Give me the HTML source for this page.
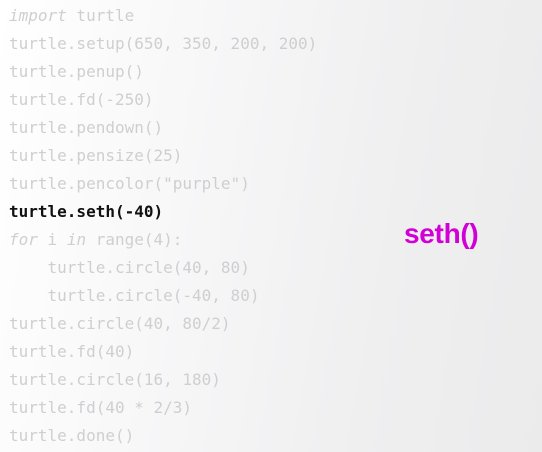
<!DOCTYPE html>
<html><head><style>
html,body{margin:0;padding:0}
body{width:542px;height:452px;overflow:hidden;background:linear-gradient(100deg,#ffffff 0%,#f7f7f8 35%,#efeff0 70%,#ebebec 100%);position:relative;font-family:"DejaVu Sans Mono","Liberation Mono",monospace;}
.l{position:absolute;left:9px;font-size:16px;line-height:20px;color:#cfcfd1;white-space:pre;}
.b{color:#111;font-weight:bold}
i{font-style:italic}
.s{position:absolute;left:404px;top:218px;font-family:"Liberation Sans",sans-serif;font-weight:bold;font-size:28px;color:#d000d6;letter-spacing:-0.3px}
</style></head><body>
<div class="l" style="top:6px"><i>import</i> turtle</div>
<div class="l" style="top:34px">turtle.setup(650, 350, 200, 200)</div>
<div class="l" style="top:62px">turtle.penup()</div>
<div class="l" style="top:90px">turtle.fd(-250)</div>
<div class="l" style="top:118px">turtle.pendown()</div>
<div class="l" style="top:146px">turtle.pensize(25)</div>
<div class="l" style="top:174px">turtle.pencolor("purple")</div>
<div class="l b" style="top:202px">turtle.seth(-40)</div>
<div class="l" style="top:230px"><i>for</i> i <i>in</i> range(4):</div>
<div class="l" style="top:258px">    turtle.circle(40, 80)</div>
<div class="l" style="top:286px">    turtle.circle(-40, 80)</div>
<div class="l" style="top:314px">turtle.circle(40, 80/2)</div>
<div class="l" style="top:342px">turtle.fd(40)</div>
<div class="l" style="top:370px">turtle.circle(16, 180)</div>
<div class="l" style="top:398px">turtle.fd(40 * 2/3)</div>
<div class="l" style="top:426px">turtle.done()</div>
<div class="s">seth()</div>
</body></html>
